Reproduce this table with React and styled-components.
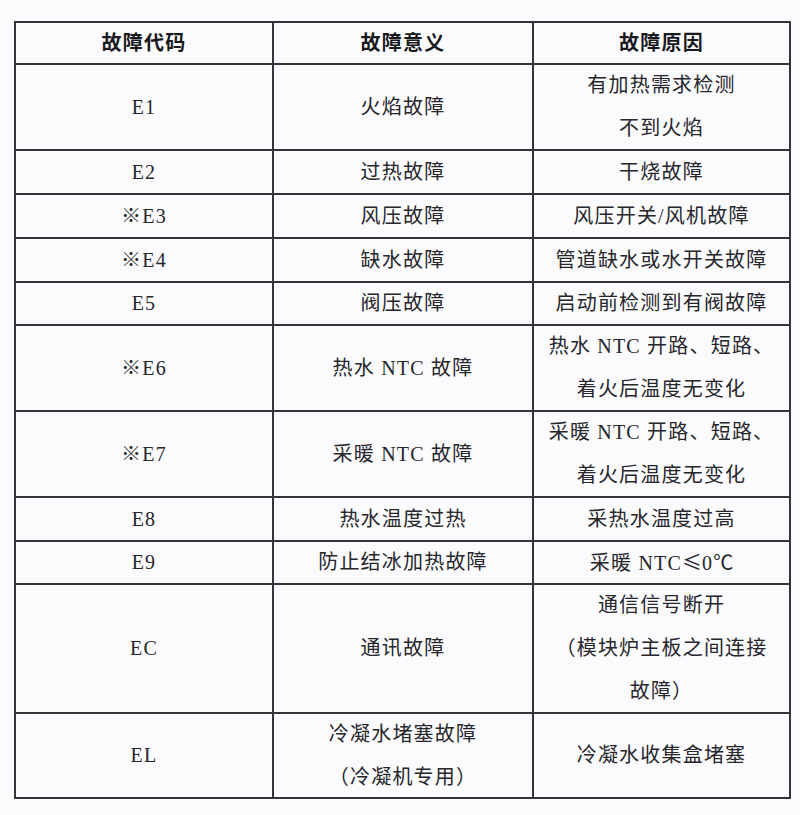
import styled, { createGlobalStyle } from "styled-components";

const GlobalStyle = createGlobalStyle`
  html, body {
    margin: 0;
    padding: 0;
    background: #fbfbfd;
  }
`;

const Page = styled.div`
  width: 800px;
  height: 815px;
  padding: 21px 0 0 14px;
  box-sizing: border-box;
  background: #fbfbfd;
`;

const Grid = styled.div`
  display: grid;
  grid-template-columns: 258px 260px 257px;
  width: 777px;
  border-left: 2px solid #333338;
  border-top: 2px solid #333338;
  box-sizing: border-box;
`;

const Cell = styled.div`
  height: ${(p) => p.$h}px;
  border-right: 2px solid #333338;
  border-bottom: 2px solid #333338;
  box-sizing: border-box;
  display: flex;
  flex-direction: column;
  align-items: center;
  justify-content: center;
  text-align: center;
  font-family: "Liberation Serif", "Noto Sans CJK SC", serif;
  font-size: 20px;
  font-weight: ${(p) => (p.$head ? 700 : 400)};
  letter-spacing: 1.2px;
  line-height: 43px;
  color: ${(p) => (p.$head ? "#1a1a1e" : "#26262b")};
  white-space: nowrap;
`;

const Line = styled.span`
  display: block;
`;

// symbols drawn from the CJK face, as in the source sheet
const Sym = styled.span`
  font-family: "Noto Sans CJK SC", sans-serif;
  letter-spacing: 0;
`;

const rows = [
  { h: 86, code: "E1", meaning: ["火焰故障"], cause: ["有加热需求检测", "不到火焰"] },
  { h: 44, code: "E2", meaning: ["过热故障"], cause: ["干烧故障"] },
  { h: 44, code: "※E3", meaning: ["风压故障"], cause: ["风压开关/风机故障"] },
  { h: 44, code: "※E4", meaning: ["缺水故障"], cause: ["管道缺水或水开关故障"] },
  { h: 43, code: "E5", meaning: ["阀压故障"], cause: ["启动前检测到有阀故障"] },
  { h: 86, code: "※E6", meaning: ["热水 NTC 故障"], cause: ["热水 NTC 开路、短路、", "着火后温度无变化"] },
  { h: 86, code: "※E7", meaning: ["采暖 NTC 故障"], cause: ["采暖 NTC 开路、短路、", "着火后温度无变化"] },
  { h: 44, code: "E8", meaning: ["热水温度过热"], cause: ["采热水温度过高"] },
  {
    h: 43,
    code: "E9",
    meaning: ["防止结冰加热故障"],
    cause: [<>采暖 NTC<Sym>≤</Sym>0<Sym>℃</Sym></>],
  },
  { h: 129, code: "EC", meaning: ["通讯故障"], cause: ["通信信号断开", "（模块炉主板之间连接", "故障）"] },
  { h: 85, code: "EL", meaning: ["冷凝水堵塞故障", "（冷凝机专用）"], cause: ["冷凝水收集盒堵塞"] },
];

const Lines = ({ items }) => items.map((t, i) => <Line key={i}>{t}</Line>);

export default function App() {
  return (
    <Page>
      <GlobalStyle />
      <Grid>
        <Cell $h={42} $head>故障代码</Cell>
        <Cell $h={42} $head>故障意义</Cell>
        <Cell $h={42} $head>故障原因</Cell>
        {rows.map((r) => [
          <Cell key={r.code + "c"} $h={r.h}>{r.code}</Cell>,
          <Cell key={r.code + "m"} $h={r.h}><Lines items={r.meaning} /></Cell>,
          <Cell key={r.code + "r"} $h={r.h}><Lines items={r.cause} /></Cell>,
        ])}
      </Grid>
    </Page>
  );
}
